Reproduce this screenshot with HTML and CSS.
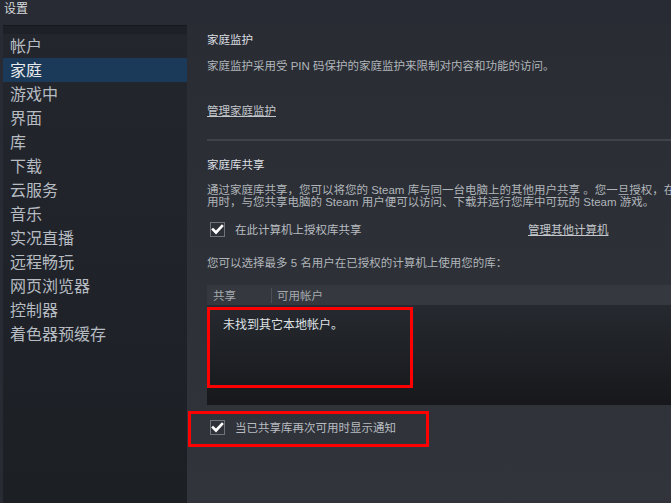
FILE: index.html
```html
<!doctype html>
<html>
  <head>
    <meta charset="utf-8" />
    <link rel="stylesheet" href="styles.css">
  </head>
  <body>
    <div class="titlebar">设置</div>
    <div class="main">
      <div class="sidebar">
        <div class="sidebar-top"></div>
        <div class="nav-item">帐户</div>
        <div class="nav-item active">家庭</div>
        <div class="nav-item">游戏中</div>
        <div class="nav-item">界面</div>
        <div class="nav-item">库</div>
        <div class="nav-item">下载</div>
        <div class="nav-item">云服务</div>
        <div class="nav-item">音乐</div>
        <div class="nav-item">实况直播</div>
        <div class="nav-item">远程畅玩</div>
        <div class="nav-item">网页浏览器</div>
        <div class="nav-item">控制器</div>
        <div class="nav-item">着色器预缓存</div>
      </div>

      <div class="content">
        <div class="section-title first">家庭监护</div>
        <div class="desc">家庭监护采用受 PIN 码保护的家庭监护来限制对内容和功能的访问。</div>
        <div class="link manage-link">管理家庭监护</div>
        <div class="divider"></div>

        <div class="section-title">家庭库共享</div>
        <div class="desc two-line">通过家庭库共享，您可以将您的 Steam 库与同一台电脑上的其他用户共享 。您一旦授权，在您不使<br>用时，与您共享电脑的 Steam 用户便可以访问、下载并运行您库中可玩的 Steam 游戏。</div>

        <div class="check-row">
          <div class="checkbox">
            <svg width="13" height="13" viewBox="0 0 13 13"><path d="M2 6.5 L5 9.5 L11 3" fill="none" stroke="#fff" stroke-width="2.6" stroke-linecap="square"/></svg>
          </div>
          <span class="check-label">在此计算机上授权库共享</span>
          <span class="link other-link">管理其他计算机</span>
        </div>

        <div class="desc users-note">您可以选择最多 5 名用户在已授权的计算机上使用您的库：</div>

        <div class="table">
          <div class="table-head">
            <div class="col-share">共享</div>
            <div class="col-sep"></div>
            <div class="col-account">可用帐户</div>
          </div>
          <div class="table-body">
            <div class="empty-note">未找到其它本地帐户。</div>
            <div class="mark mark-table"></div>
          </div>
        </div>

        <div class="check-row notify-row">
          <div class="checkbox">
            <svg width="13" height="13" viewBox="0 0 13 13"><path d="M2 6.5 L5 9.5 L11 3" fill="none" stroke="#fff" stroke-width="2.6" stroke-linecap="square"/></svg>
          </div>
          <span class="check-label">当已共享库再次可用时显示通知</span>
          <div class="mark mark-notify"></div>
        </div>
      </div>
    </div>
  </body>
</html>
```

FILE: styles.css
```css
* {
  margin: 0;
  padding: 0;
  box-sizing: border-box;
}

body {
  width: 671px;
  height: 503px;
  overflow: hidden;
  background: #282b33;
  font-family: 'Liberation Sans', Arial, 'Noto Sans CJK SC', sans-serif;
  color: #b8bcc1;
}

.titlebar {
  height: 25px;
  padding: 2px 0 0 4px;
  font-size: 12px;
  line-height: 14px;
  color: #d6d9dc;
}

.main {
  display: flex;
  height: 478px;
  padding-left: 3px;
}

.sidebar {
  width: 184px;
  background: linear-gradient(180deg, #23262d 0%, #1c1f24 100%);
  border-top: 1px solid #16181c;
}

.sidebar-top {
  height: 8px;
  background: #1d2027;
}

.nav-item {
  height: 24px;
  line-height: 25px;
  padding-left: 7px;
  font-size: 16px;
  color: #b6bcc2;
}

.nav-item.active {
  background: #1b3a5a;
  color: #e8eaec;
}

.content {
  flex: 1;
  padding-left: 20px;
  background: linear-gradient(180deg, #292c33 0%, #31343b 100%);
  white-space: nowrap;
  overflow: hidden;
}

.section-title {
  font-size: 11.5px;
  line-height: 14px;
  color: #dcdfe2;
  margin-top: 17px;
}

.section-title.first {
  margin-top: 8px;
}

.desc {
  font-size: 11.5px;
  line-height: 14px;
  color: #b0b5ba;
  margin-top: 12px;
}

.desc.two-line {
  line-height: 12px;
  margin-top: 12px;
}

.link {
  font-size: 11.5px;
  line-height: 14px;
  color: #c3c7cb;
  text-decoration: underline;
}

.manage-link {
  margin-top: 31px;
}

.divider {
  height: 2px;
  background: #3f4249;
  margin-top: 21px;
}

.check-row {
  display: flex;
  align-items: center;
  height: 15px;
  margin-top: 14px;
  padding-left: 3px;
  position: relative;
}

.checkbox {
  width: 15px;
  height: 15px;
  border: 1px solid #707379;
  display: flex;
  align-items: center;
  justify-content: center;
}

.check-label {
  margin-left: 10px;
  font-size: 11.5px;
  line-height: 14px;
  color: #b8bcc1;
  width: 293px;
}

.users-note {
  margin-top: 19px;
}

.table {
  margin-top: 15px;
}

.table-head {
  display: flex;
  align-items: center;
  height: 20px;
  background: #35383f;
  font-size: 11.5px;
  color: #a4a9ae;
}

.col-share {
  width: 64px;
  padding-left: 6px;
}

.col-sep {
  width: 1px;
  height: 15px;
  background: #4c4f56;
  margin-right: 5px;
}

.table-body {
  height: 100px;
  background: linear-gradient(180deg, #26292f 0%, #16181b 100%);
  position: relative;
  padding: 13px 0 0 16px;
}

.empty-note {
  font-size: 12px;
  line-height: 14px;
  color: #dfe2e5;
}

.notify-row {
  margin-top: 15px;
}

.mark {
  position: absolute;
  border: 3px solid #ff0000;
}

.mark-table {
  left: 0;
  top: 2px;
  width: 206px;
  height: 81px;
}

.mark-notify {
  left: -19px;
  top: -9px;
  width: 241px;
  height: 36px;
}
```
